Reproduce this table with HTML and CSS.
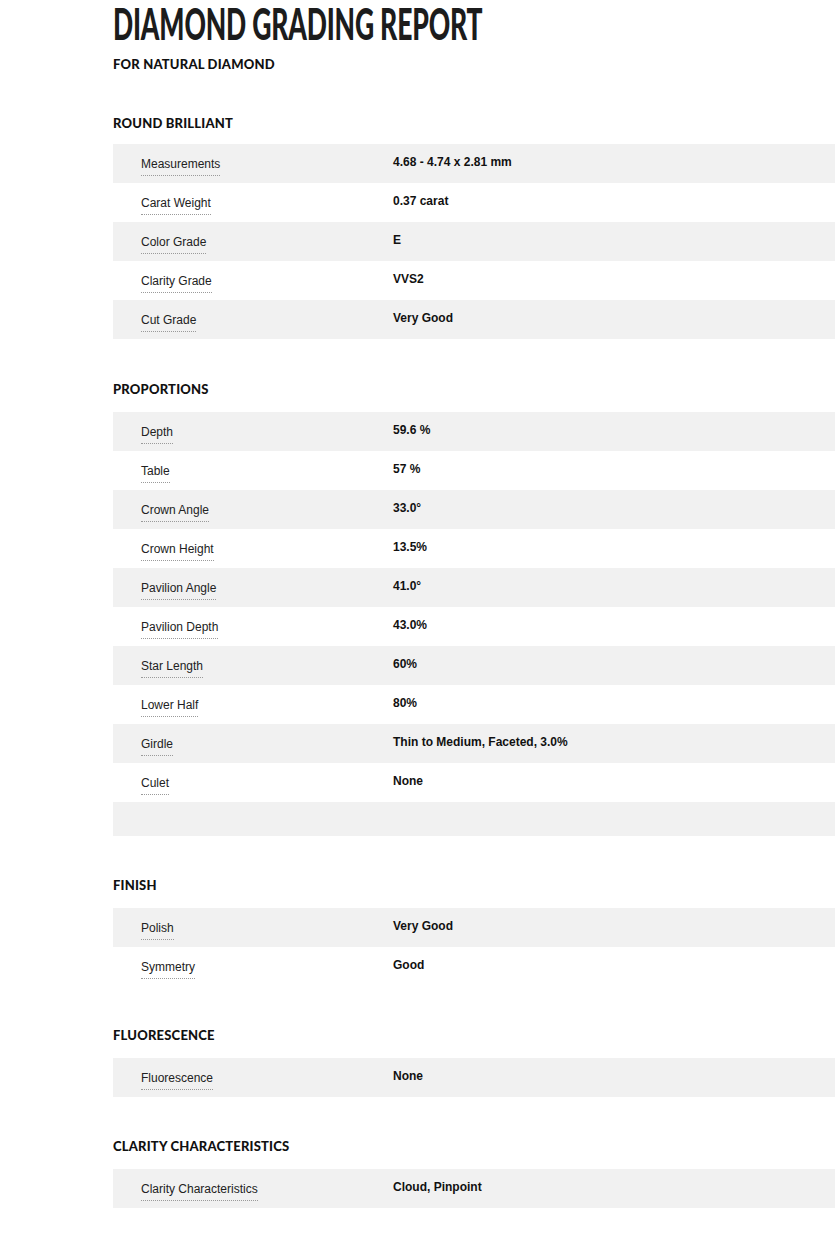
FILE: index.html
```html
<!DOCTYPE html>
<html>
<head>
<meta charset="utf-8">
<link rel="stylesheet" href="styles.css">
</head>
<body>
<div class="page">
  <h1 class="title">DIAMOND GRADING REPORT</h1>
  <div class="subtitle">FOR NATURAL DIAMOND</div>

  <section class="section section-first">
    <h2 class="section-head">ROUND BRILLIANT</h2>
    <div class="rows">
      <div class="row"><div class="cell"><span class="label">Measurements</span></div><span class="value">4.68 - 4.74 x 2.81 mm</span></div>
      <div class="row"><div class="cell"><span class="label">Carat Weight</span></div><span class="value">0.37 carat</span></div>
      <div class="row"><div class="cell"><span class="label">Color Grade</span></div><span class="value">E</span></div>
      <div class="row"><div class="cell"><span class="label">Clarity Grade</span></div><span class="value">VVS2</span></div>
      <div class="row"><div class="cell"><span class="label">Cut Grade</span></div><span class="value">Very Good</span></div>
    </div>
  </section>

  <section class="section">
    <h2 class="section-head">PROPORTIONS</h2>
    <div class="rows">
      <div class="row"><div class="cell"><span class="label">Depth</span></div><span class="value">59.6 %</span></div>
      <div class="row"><div class="cell"><span class="label">Table</span></div><span class="value">57 %</span></div>
      <div class="row"><div class="cell"><span class="label">Crown Angle</span></div><span class="value">33.0°</span></div>
      <div class="row"><div class="cell"><span class="label">Crown Height</span></div><span class="value">13.5%</span></div>
      <div class="row"><div class="cell"><span class="label">Pavilion Angle</span></div><span class="value">41.0°</span></div>
      <div class="row"><div class="cell"><span class="label">Pavilion Depth</span></div><span class="value">43.0%</span></div>
      <div class="row"><div class="cell"><span class="label">Star Length</span></div><span class="value">60%</span></div>
      <div class="row"><div class="cell"><span class="label">Lower Half</span></div><span class="value">80%</span></div>
      <div class="row"><div class="cell"><span class="label">Girdle</span></div><span class="value">Thin to Medium, Faceted, 3.0%</span></div>
      <div class="row"><div class="cell"><span class="label">Culet</span></div><span class="value">None</span></div>
      <div class="row row-empty"></div>
    </div>
  </section>

  <section class="section">
    <h2 class="section-head">FINISH</h2>
    <div class="rows">
      <div class="row"><div class="cell"><span class="label">Polish</span></div><span class="value">Very Good</span></div>
      <div class="row"><div class="cell"><span class="label">Symmetry</span></div><span class="value">Good</span></div>
    </div>
  </section>

  <section class="section">
    <h2 class="section-head">FLUORESCENCE</h2>
    <div class="rows">
      <div class="row"><div class="cell"><span class="label">Fluorescence</span></div><span class="value">None</span></div>
    </div>
  </section>

  <section class="section">
    <h2 class="section-head">CLARITY CHARACTERISTICS</h2>
    <div class="rows">
      <div class="row"><div class="cell"><span class="label">Clarity Characteristics</span></div><span class="value">Cloud, Pinpoint</span></div>
    </div>
  </section>
</div>
</body>
</html>
```

FILE: styles.css
```css
html, body {
  margin: 0;
  padding: 0;
  background: #ffffff;
}

.page {
  padding: 0 0 0 113px;
  color: #1a1a1a;
  font-family: "Liberation Sans", Arial, sans-serif;
}

.title {
  margin: 0;
  padding-top: 0;
  font-family: "Lato", sans-serif;
  font-weight: 900;
  font-size: 44px;
  line-height: 46px;
  letter-spacing: -0.3px;
  color: #1c1c1c;
  transform: scaleX(0.603);
  transform-origin: left center;
  white-space: nowrap;
}

.subtitle {
  margin-top: 10px;
  font-family: "Lato", sans-serif;
  font-weight: 900;
  font-size: 13px;
  line-height: 16px;
  letter-spacing: 0.2px;
  color: #111;
}

.section {
  margin-top: 41px;
}

.section-first {
  margin-top: 43px;
  padding-bottom: 1px;
}

.section-head {
  margin: 0 0 15px 0;
  font-family: "Lato", sans-serif;
  font-weight: 900;
  font-size: 13px;
  line-height: 16px;
  letter-spacing: 0.2px;
  color: #111;
}

.section-first .section-head {
  margin-bottom: 13px;
}

.rows {
  display: flex;
  flex-direction: column;
}

.row {
  display: flex;
  align-items: flex-start;
  height: 39px;
  box-sizing: border-box;
  padding-left: 28px;
  font-size: 12px;
}

.row:nth-child(odd) {
  background: #f1f1f1;
}

.row-empty {
  height: 34px;
}

.cell {
  width: 252px;
  flex: none;
  padding-top: 13px;
}

.label {
  display: inline-block;
  line-height: 14px;
  padding-bottom: 4px;
  border-bottom: 1px dotted #9a9a9a;
  color: #222;
}

.value {
  margin-top: 11px;
  line-height: 14px;
  font-weight: bold;
  color: #111;
}
```
